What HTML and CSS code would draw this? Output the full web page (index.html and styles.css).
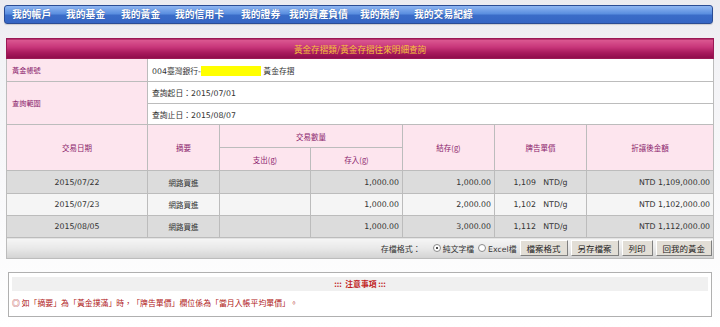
FILE: index.html
```html
<!DOCTYPE html>
<html lang="zh-Hant">
<head>
<meta charset="utf-8">
<title>黃金存摺往來明細查詢</title>
<link rel="stylesheet" href="styles.css">
</head>
<body>
<nav class="nav">
  <span class="nav-item">我的帳戶</span>
  <span class="nav-item">我的基金</span>
  <span class="nav-item">我的黃金</span>
  <span class="nav-item">我的信用卡</span>
  <span class="nav-item">我的證券</span>
  <span class="nav-item">我的資產負債</span>
  <span class="nav-item">我的預約</span>
  <span class="nav-item">我的交易紀錄</span>
</nav>

<table class="main">
  <colgroup>
    <col class="c1"><col class="c2"><col class="c3"><col class="c4"><col class="c5"><col class="c6"><col class="c7">
  </colgroup>
  <tr class="r-title"><th class="title" colspan="7">黃金存摺類/黃金存摺往來明細查詢</th></tr>
  <tr class="r-acct">
    <td class="lbl">黃金帳號</td>
    <td class="val" colspan="6">004臺灣銀行-<span class="mask"></span> 黃金存摺</td>
  </tr>
  <tr class="r-q1">
    <td class="lbl" rowspan="2">查詢範圍</td>
    <td class="val" colspan="6">查詢起日：2015/07/01</td>
  </tr>
  <tr class="r-q2">
    <td class="val" colspan="6">查詢止日：2015/08/07</td>
  </tr>
  <tr class="r-h1">
    <th class="hd" rowspan="2">交易日期</th>
    <th class="hd" rowspan="2">摘要</th>
    <th class="hd" colspan="2">交易數量</th>
    <th class="hd" rowspan="2">結存(g)</th>
    <th class="hd" rowspan="2">牌告單價</th>
    <th class="hd" rowspan="2">折讓後金額</th>
  </tr>
  <tr class="r-h2">
    <th class="hd">支出(g)</th>
    <th class="hd">存入(g)</th>
  </tr>
  <tr class="row dark r-d1">
    <td class="ctr">2015/07/22</td>
    <td class="ctr cjk">網路買進</td>
    <td class="num"></td>
    <td class="num">1,000.00</td>
    <td class="num">1,000.00</td>
    <td class="ctr">1,109&nbsp;&nbsp;&nbsp;NTD/g</td>
    <td class="num">NTD 1,109,000.00</td>
  </tr>
  <tr class="row light r-d2">
    <td class="ctr">2015/07/23</td>
    <td class="ctr cjk">網路買進</td>
    <td class="num"></td>
    <td class="num">1,000.00</td>
    <td class="num">2,000.00</td>
    <td class="ctr">1,102&nbsp;&nbsp;&nbsp;NTD/g</td>
    <td class="num">NTD 1,102,000.00</td>
  </tr>
  <tr class="row dark r-d3">
    <td class="ctr">2015/08/05</td>
    <td class="ctr cjk">網路買進</td>
    <td class="num"></td>
    <td class="num">1,000.00</td>
    <td class="num">3,000.00</td>
    <td class="ctr">1,112&nbsp;&nbsp;&nbsp;NTD/g</td>
    <td class="num">NTD 1,112,000.00</td>
  </tr>
  <tr class="r-foot">
    <td class="foot" colspan="7">
      <div class="tools">
        <span class="fmt-label">存檔格式：</span>
        <span class="radio checked"></span><span class="opt">純文字檔</span>
        <span class="radio"></span><span class="opt">Excel檔</span>
        <button class="btn">檔案格式</button>
        <button class="btn">另存檔案</button>
        <button class="btn">列印</button>
        <button class="btn">回我的黃金</button>
      </div>
    </td>
  </tr>
</table>

<div class="notice">
  <div class="notice-hd">:::&nbsp;&nbsp;注意事項 :::</div>
  <p class="notice-txt">◎ 如「摘要」為「黃金撲滿」時，「牌告單價」欄位係為「當月入帳平均單價」。</p>
</div>
</body>
</html>
```

FILE: styles.css
```css
* { box-sizing: border-box; }
html, body { margin: 0; padding: 0; }
body {
  width: 720px;
  height: 327px;
  overflow: hidden;
  background: linear-gradient(#ebebf0 0, #f3f3f6 60px, #fbfbfc 240px, #ffffff 327px);
  font-family: "DejaVu Sans", "Noto Sans CJK TC", sans-serif;
  color: #333;
}

/* nav */
.nav {
  margin: 5px 7px 0 4px;
  height: 19px;
  border: 1px solid #2a4c94;
  border-radius: 3px;
  background: linear-gradient(#8fb6f2 0%, #5b8fe0 45%, #3a6cc8 55%, #3566c4 100%);
  display: grid;
  grid-template-columns: 54px 55px 54px 66px 48px 71px 54px auto;
  align-items: center;
  padding-left: 7px;
  box-shadow: 0 1px 1px rgba(0,0,0,0.15);
}
.nav-item {
  font-family: "Noto Sans CJK TC", sans-serif;
  font-size: 9.8px;
  font-weight: bold;
  color: #fff;
  white-space: nowrap;
  line-height: 17px;
  text-shadow: 0 0 1px rgba(20,40,100,0.6);
}

/* main table */
.main {
  margin: 14px 0 0 6px;
  width: 707px;
  table-layout: fixed;
  border-collapse: collapse;
  border: 1px solid #b9b9b9;
}
.c1 { width: 141px; }
.c2 { width: 72px; }
.c3 { width: 91px; }
.c4 { width: 92px; }
.c5 { width: 92px; }
.c6 { width: 92px; }
.c7 { width: 127px; }
.main td, .main th {
  border: 1px solid #bcbcbc;
  padding: 0;
  font-weight: normal;
}
.r-title { height: 20px; }
.title {
  background: linear-gradient(#dc5a92 0%, #c8367a 40%, #a8195c 70%, #8e0c4a 100%);
  color: #f4c23a;
  font-family: "Noto Sans CJK TC", sans-serif;
  font-size: 8.6px;
  text-align: center;
  border-color: #9a1a55 !important;
}
.r-acct { height: 23px; }
.r-q1 { height: 22px; }
.r-q2 { height: 21px; }
.lbl {
  background: #fde5ee;
  color: #8a1c6c;
  font-family: "Noto Sans CJK TC", sans-serif;
  font-size: 7.2px;
  padding-left: 5px !important;
  text-align: left;
}
.val {
  background: #fff;
  font-size: 7.8px;
  color: #333;
  padding-left: 4px !important;
}
.mask {
  display: inline-block;
  width: 60px;
  height: 10px;
  background: #ffff00;
  vertical-align: -2px;
}
.r-h1 { height: 23px; }
.r-h2 { height: 23px; }
.hd {
  background: #fde5ee;
  color: #8a1c6c;
  font-family: "Noto Sans CJK TC", sans-serif;
  font-size: 7.5px;
  text-align: center;
}
.r-d1 { height: 23px; }
.r-d2, .r-d3 { height: 22px; }
.row.dark td { background: #dcdcdc; }
.row.light td { background: #f5f5f5; }
.row td { font-size: 7.8px; color: #333; }
.ctr { text-align: center; }
.cjk { font-family: "Noto Sans CJK TC", sans-serif; font-size: 7.5px !important; }
.num { text-align: right; padding-right: 3px !important; }

.r-foot { height: 21px; }
.foot {
  background: linear-gradient(#f6f6f6 0%, #e8e8e8 50%, #d2d2d2 100%);
}
.tools {
  display: flex;
  justify-content: flex-end;
  align-items: center;
  padding-right: 1px;
  font-size: 8px;
  color: #333;
}
.fmt-label {
  font-family: "Noto Sans CJK TC", sans-serif;
  margin-right: 8px;
}
.opt { font-family: "DejaVu Sans", "Noto Sans CJK TC", sans-serif; font-size: 7.8px; }
.radio {
  display: inline-block;
  width: 8px;
  height: 8px;
  border-radius: 50%;
  border: 1px solid #8a8a8a;
  background: #fff;
  margin-right: 2px;
  margin-left: 4px;
  position: relative;
}
.radio.checked::after {
  content: "";
  position: absolute;
  left: 2px;
  top: 2px;
  width: 2px;
  height: 2px;
  border-radius: 50%;
  background: #111;
}
.btn {
  font-family: "Noto Sans CJK TC", sans-serif;
  font-size: 8.5px;
  color: #222;
  height: 16px;
  line-height: 12px;
  padding: 0 6px;
  margin-left: 3px;
  background: #e2ded6;
  border: 1px solid;
  border-color: #ffffff #7f7f7f #7f7f7f #ffffff;
  border-radius: 0;
}

/* notice */
.notice {
  margin: 13px 0 0 8px;
  width: 704px;
  height: 45px;
  border: 1px solid #b0b0b0;
  background: #fff;
  padding: 4px 3px 0 3px;
}
.notice-hd {
  background: #f0f0f0;
  height: 14px;
  line-height: 14px;
  text-align: center;
  color: #c0201c;
  font-family: "Noto Sans CJK TC", sans-serif;
  font-size: 7.8px;
  font-weight: bold;
}
.notice-txt {
  margin: 6px 0 0 0;
  font-family: "Noto Sans CJK TC", sans-serif;
  font-size: 7.9px;
  color: #b02020;
}
```
